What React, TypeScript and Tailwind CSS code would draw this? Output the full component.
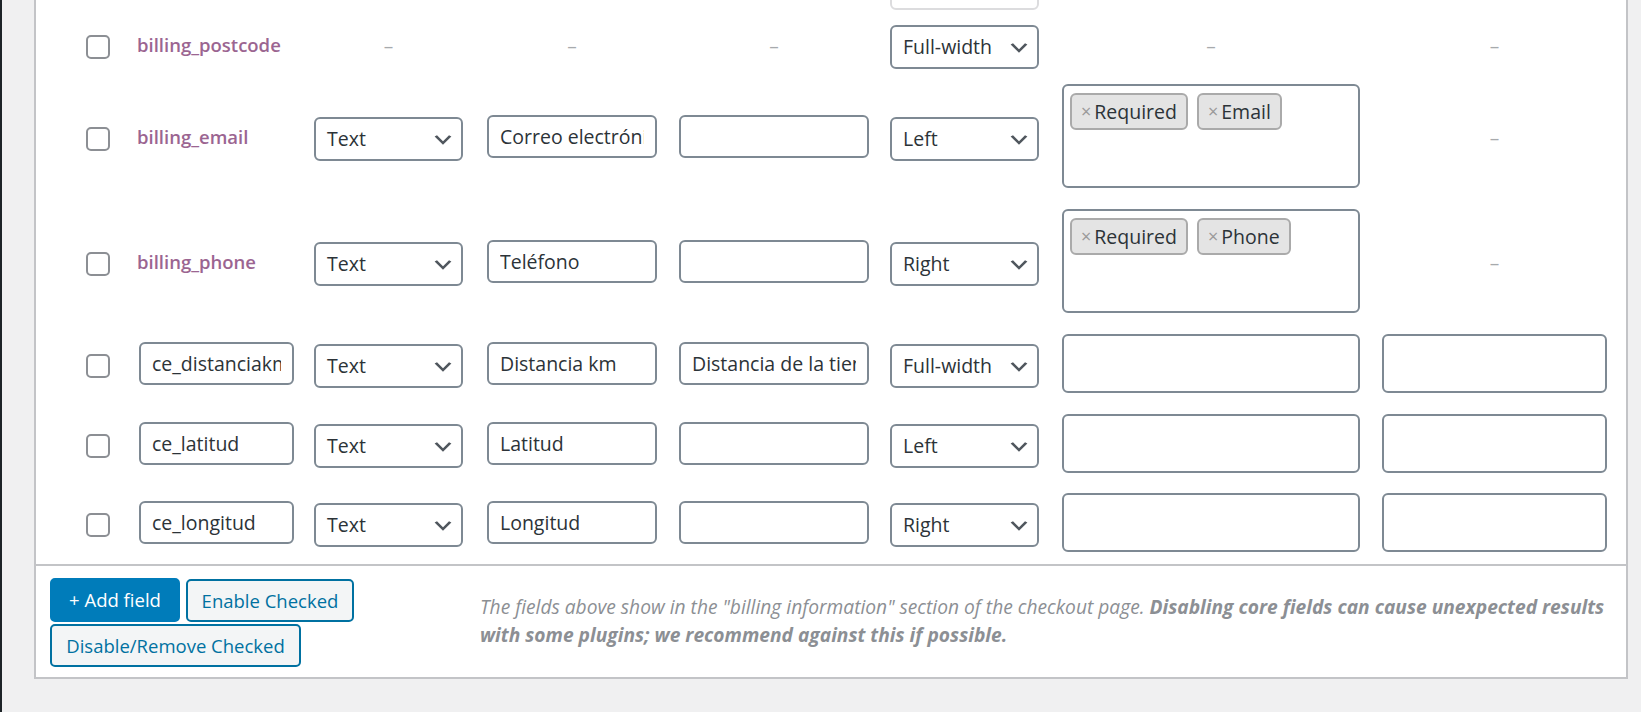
import React from "react"

const font = { fontFamily: '"Open Sans", "Noto Sans", sans-serif' }

const Chevron = () => (
  <svg width="24" height="24" viewBox="0 0 20 20" className="mt-[2px] shrink-0">
    <path d="M5 6l5 5 5-5 2 1-7 7-7-7 2-1z" fill="#50575e" />
  </svg>
)

const Select = ({ value }: { value: string }) => (
  <div className="flex h-[44px] w-[149px] items-center justify-between rounded-[6px] border-2 border-[#7e8993] bg-white pl-[11px] pr-[6px] text-[19.5px] text-[#2c3338]">
    <span>{value}</span>
    <Chevron />
  </div>
)

const TextInput = ({ value, w }: { value: string; w: string }) => (
  <input
    readOnly
    value={value}
    style={font}
    className={`mb-[5px] h-[43px] ${w} rounded-[6px] border-2 border-[#7e8993] bg-white px-[11px] text-[19.5px] text-[#2c3338] outline-none`}
  />
)

const Dash = ({ w }: { w: string }) => (
  <div className={`flex ${w} justify-center text-[19px] text-[#a7aaad]`}>–</div>
)

const Tag = ({ label }: { label: string }) => (
  <div className="flex h-[37px] items-center rounded-[6px] border-2 border-[#aaaaaa] bg-[#e4e4e4] pl-[9px] pr-[9px] text-[19.5px] text-[#2c3338]">
    <span className="mr-[3px] text-[18px] text-[#999999]">×</span>
    {label}
  </div>
)

const Multi = ({ tags, h }: { tags: string[]; h: string }) => (
  <div className={`mb-[5px] flex ${h} w-[298px] flex-wrap content-start gap-x-[9px] rounded-[6px] border-2 border-[#7e8993] bg-white pl-[6px] pt-[7px]`}>
    {tags.map(t => (
      <Tag key={t} label={t} />
    ))}
  </div>
)

const Checkbox = () => (
  <div className="h-[24px] w-[24px] rounded-[5px] border-2 border-[#8c8f94] bg-white" />
)

interface Row {
  name: string
  core: boolean
  h: string
  type?: string
  label?: string
  desc?: string
  pos: string
  tags?: string[]
  multiH?: string
  extra?: boolean
}

const rows: Row[] = [
  { name: "billing_postcode", core: true, h: "h-[59px]", pos: "Full-width" },
  { name: "billing_email", core: true, h: "h-[125px]", type: "Text", label: "Correo electrónico", desc: "", pos: "Left", tags: ["Required", "Email"], multiH: "h-[104px]" },
  { name: "billing_phone", core: true, h: "h-[125px]", type: "Text", label: "Teléfono", desc: "", pos: "Right", tags: ["Required", "Phone"], multiH: "h-[104px]" },
  { name: "ce_distanciakm", core: false, h: "h-[80px]", type: "Text", label: "Distancia km", desc: "Distancia de la tienda", pos: "Full-width", tags: [], multiH: "h-[59px]", extra: true },
  { name: "ce_latitud", core: false, h: "h-[80px]", type: "Text", label: "Latitud", desc: "", pos: "Left", tags: [], multiH: "h-[59px]", extra: true },
  { name: "ce_longitud", core: false, h: "h-[78px]", type: "Text", label: "Longitud", desc: "", pos: "Right", tags: [], multiH: "h-[59px]", extra: true },
]

const FieldRow = ({ r }: { r: Row }) => (
  <div className={`flex ${r.h} items-center`}>
    <div className="flex w-[101px] shrink-0 pl-[50px]">
      <Checkbox />
    </div>
    <div className="flex w-[177px] shrink-0 items-center">
      {r.core ? (
        <span className="mb-[3px] text-[18.5px] font-semibold text-[#9b6591]">{r.name}</span>
      ) : (
        <div className="pl-[2px]">
          <TextInput value={r.name} w="w-[155px]" />
        </div>
      )}
    </div>
    <div className="flex w-[173px] shrink-0 items-center">
      {r.type ? <Select value={r.type} /> : <Dash w="w-[149px]" />}
    </div>
    <div className="flex w-[192px] shrink-0 items-center">
      {r.label !== undefined ? <TextInput value={r.label} w="w-[170px]" /> : <Dash w="w-[170px]" />}
    </div>
    <div className="flex w-[211px] shrink-0 items-center">
      {r.desc !== undefined ? <TextInput value={r.desc} w="w-[190px]" /> : <Dash w="w-[190px]" />}
    </div>
    <div className="flex w-[172px] shrink-0 items-center">
      <Select value={r.pos} />
    </div>
    <div className="flex w-[320px] shrink-0 items-center">
      {r.tags ? <Multi tags={r.tags} h={r.multiH ?? "h-[59px]"} /> : <Dash w="w-[298px]" />}
    </div>
    <div className="flex w-[225px] shrink-0 items-center">
      {r.extra ? (
        <div className="mb-[5px] h-[59px] w-[225px] rounded-[6px] border-2 border-[#7e8993] bg-white" />
      ) : (
        <Dash w="w-[225px]" />
      )}
    </div>
  </div>
)

export default function App() {
  return (
    <div className="flex h-[712px] w-full overflow-hidden bg-[#f0f0f1]" style={font}>
      <div className="w-[2px] shrink-0 bg-[#1d2327]" />
      <div className="w-[32px] shrink-0" />
      <div className="h-[679px] w-[1594px] shrink-0 border-x-2 border-b-2 border-[#c3c4c7] bg-white">
        <div className="flex h-[17px] overflow-hidden">
          <div className="w-[854px] shrink-0" />
          <div className="-mt-[34px] h-[44px] w-[149px] shrink-0 rounded-[6px] border-2 border-[#dcdcde] bg-white" />
        </div>
        {rows.map(r => (
          <FieldRow key={r.name} r={r} />
        ))}
        <div className="h-[2px] bg-[#c3c4c7]" />
        <div className="flex">
          <div className="w-[444px] shrink-0 pb-[10px] pl-[14px] pt-[12px]">
            <div className="flex w-[330px] flex-wrap items-end gap-x-[6px] gap-y-[2px]">
              <button className="h-[44px] w-[130px] rounded-[5px] border-2 border-[#007cba] bg-[#007cba] text-[18.5px] text-white">
                + Add field
              </button>
              <button className="h-[43px] w-[168px] rounded-[5px] border-2 border-[#0071a1] bg-[#f3f5f6] text-[18.5px] text-[#0071a1]">
                Enable Checked
              </button>
              <button className="h-[43px] w-[251px] rounded-[5px] border-2 border-[#0071a1] bg-[#f3f5f6] text-[18.5px] text-[#0071a1]">
                Disable/Remove Checked
              </button>
            </div>
          </div>
          <div className="pt-[27px]">
            <p className="whitespace-nowrap text-[19.2px] italic leading-[28px] text-[#8c8f94]">
              The fields above show in the "billing information" section of the checkout page.{" "}
              <strong className="font-bold">
                Disabling core fields can cause unexpected results
                <br />
                with some plugins; we recommend against this if possible.
              </strong>
            </p>
          </div>
        </div>
      </div>
    </div>
  )
}
